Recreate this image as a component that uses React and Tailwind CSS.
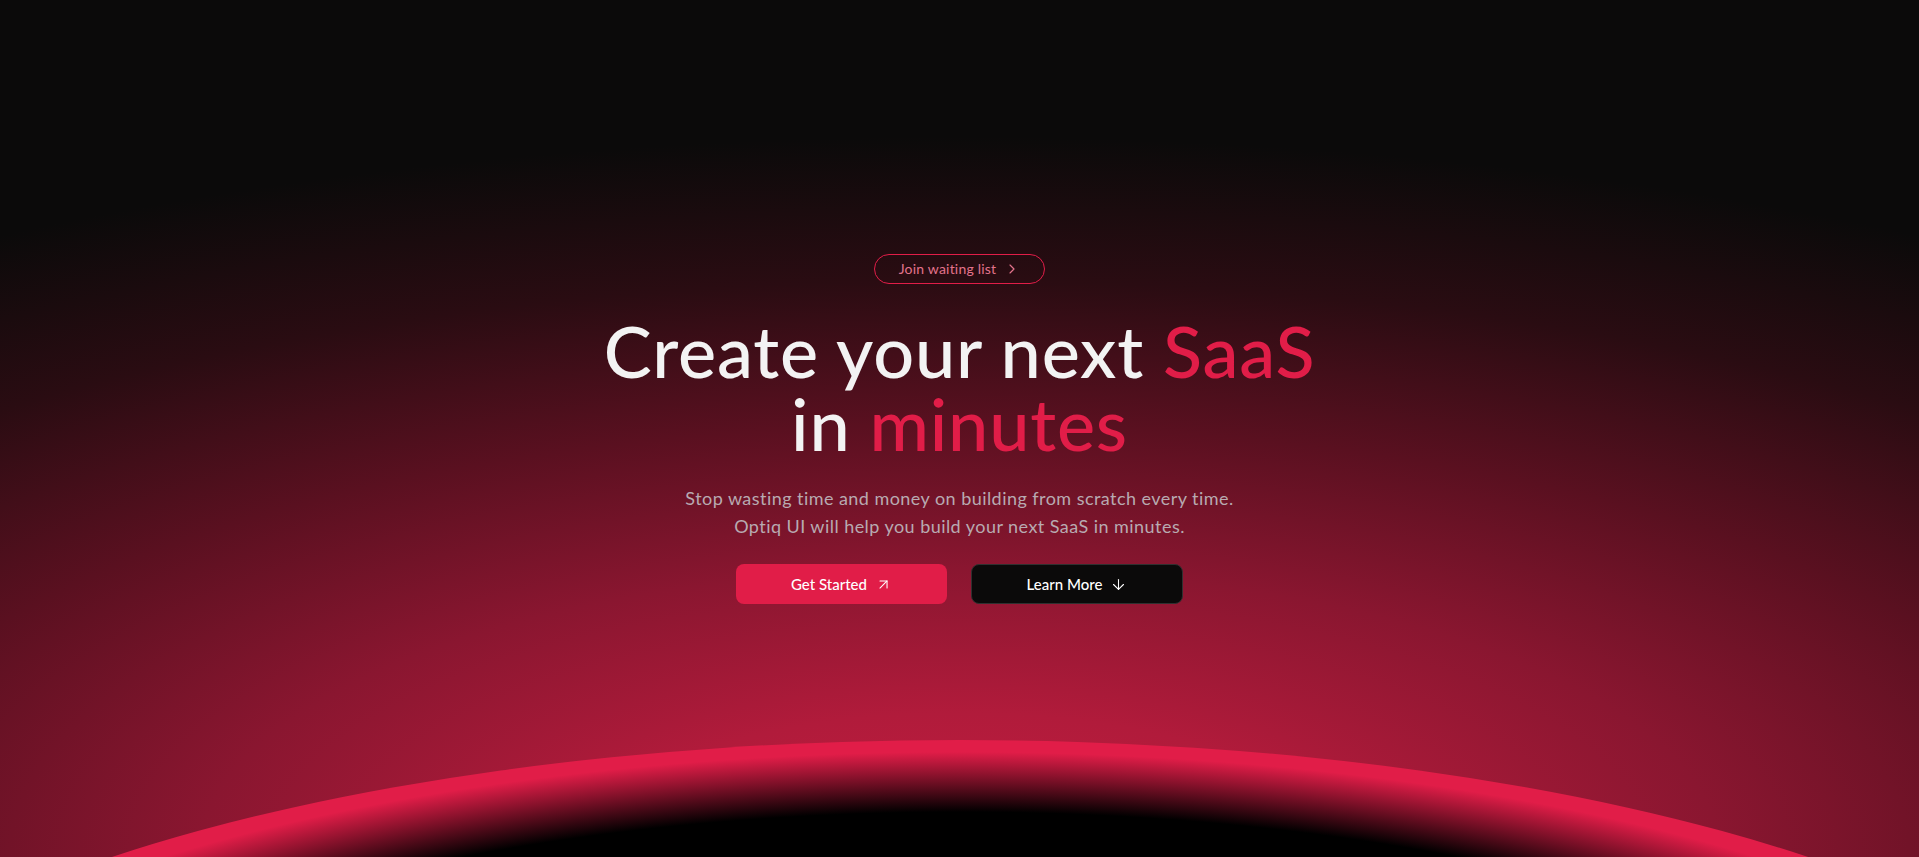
import React from 'react'
import { ChevronRight, ArrowUpRight, ArrowDown } from 'lucide-react'

export default function App() {
  return (
    <div className="relative h-[857px] w-full overflow-hidden bg-[#0b0a0a] bg-[radial-gradient(ellipse_1900px_720px_at_50%_100%,#c21d40_0%,#b11b3b_20%,#8a1630_40%,#5a1020_60%,#2a0c12_80%,#0b0a0a_100%)] font-['Lato',sans-serif]">
      {/* hero */}
      <div className="relative z-10 flex flex-col items-center pt-[254px] text-center">
        <a
          href="#"
          className="flex h-[30px] items-center gap-2 rounded-full border border-[#e11d48] px-6 text-sm tracking-[0.2px] text-[#e3738c]"
        >
          Join waiting list
          <ChevronRight size={16} strokeWidth={1.75} />
        </a>

        <h1 className="mt-[30px] text-7xl font-medium leading-[73px] tracking-[0.8px] text-[#f3f3f3]">
          Create your next <span className="text-[#e11d48]">SaaS</span>
          <br />
          in <span className="text-[#e11d48]">minutes</span>
        </h1>

        <p className="mt-6 text-lg leading-7 tracking-[0.45px] text-[#b8aab1]">
          Stop wasting time and money on building from scratch every time.
          <br />
          Optiq UI will help you build your next SaaS in minutes.
        </p>

        <div className="mt-6 flex gap-6">
          <button className="flex h-10 w-[211px] items-center justify-center gap-2 rounded-lg bg-[#e11d48] text-[15px] font-medium text-white">
            Get Started
            <ArrowUpRight size={17} strokeWidth={1.5} />
          </button>
          <button className="flex h-10 w-[212px] items-center justify-center gap-2 rounded-lg border border-[#303030] bg-[#0b0a0a] text-[15px] font-medium text-white">
            Learn More
            <ArrowDown size={17} strokeWidth={1.5} />
          </button>
        </div>
      </div>

      {/* planet arc */}
      <div className="absolute left-1/2 top-[740px] h-[800px] w-[2400px] -translate-x-1/2 rounded-[50%] bg-[radial-gradient(ellipse_farthest-side_at_50%_50%,#000_82%,#e11d48_97%)]" />
    </div>
  )
}
